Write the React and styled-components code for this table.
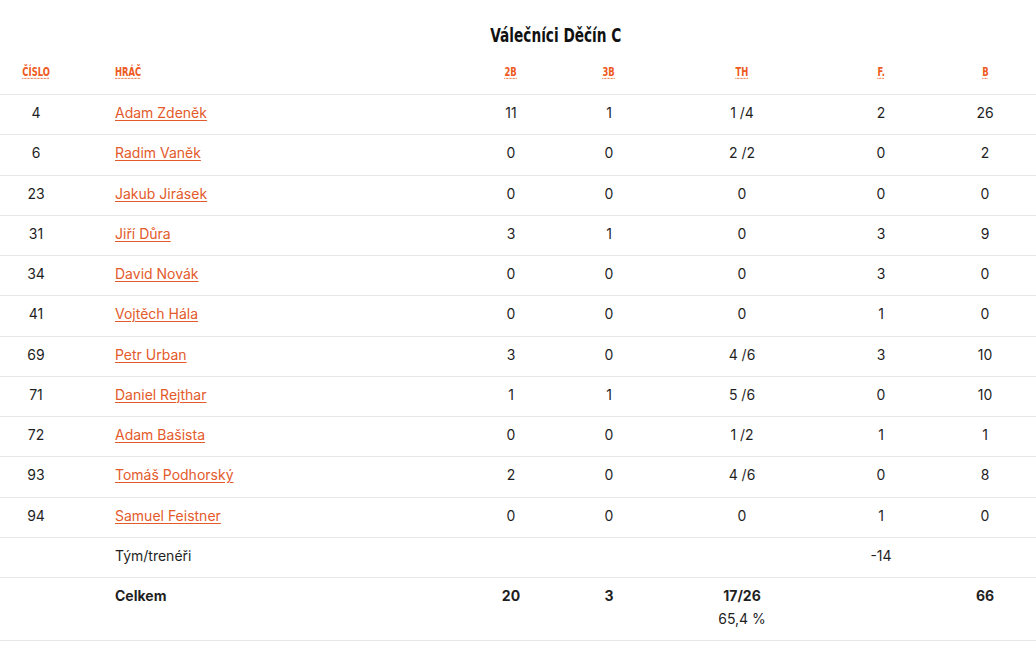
import React from 'react';
import styled, { createGlobalStyle } from 'styled-components';

const GlobalStyle = createGlobalStyle`
    html, body {
        margin: 0;
        padding: 0;
        background: #fff;
    }
    body {
        font-family: Inter, "Noto Sans", sans-serif;
        font-size: 14px;
        color: #1f1f1f;
    }
`;

const Wrapper = styled.div`
    width: 1036px;
`;

const Title = styled.h2`
    margin: 0;
    padding: 23px 0 0 76px;
    text-align: center;
    line-height: 24px;
`;

const TitleText = styled.span`
    display: inline-block;
    transform: scaleX(0.8);
    font-family: "DejaVu Sans Condensed", "DejaVu Sans", sans-serif;
    font-stretch: condensed;
    font-weight: 700;
    font-size: 19px;
    color: #111;
`;

const Table = styled.table`
    width: 100%;
    border-collapse: collapse;
    table-layout: fixed;
`;

const Th = styled.th`
    padding: 16px 0 14px;
    padding-left: ${p => (p.$left ? '43px' : '0')};
    text-align: ${p => (p.$left ? 'left' : 'center')};
    border-bottom: 1px solid #e6e6e6;
    line-height: 16px;
    font-weight: 400;
`;

const Abbr = styled.abbr`
    display: inline-block;
    transform: scaleX(0.72);
    transform-origin: ${p => (p.$left ? 'left center' : 'center')};
    font-family: "DejaVu Sans Condensed", "DejaVu Sans", sans-serif;
    font-stretch: condensed;
    font-weight: 700;
    font-size: 13px;
    text-transform: uppercase;
    color: #ee5a22;
    text-decoration: underline dotted;
    text-underline-offset: 2px;
    cursor: help;
`;

const Td = styled.td`
    padding: 8px 0 11.25px;
    padding-left: ${p => (p.$left ? '43px' : '0')};
    text-align: ${p => (p.$left ? 'left' : 'center')};
    vertical-align: top;
    line-height: 20px;
    border-bottom: 1px solid #e6e6e6;
    font-weight: ${p => (p.$bold ? 700 : 400)};
`;

const PlayerLink = styled.a`
    color: #e35a2b;
    text-decoration: underline;
    text-underline-offset: 2px;
`;

const Sub = styled.div`
    margin-top: 3px;
    font-weight: 400;
`;

const players = [
    [4, 'Adam Zdeněk', 11, 1, '1 /4', 2, 26],
    [6, 'Radim Vaněk', 0, 0, '2 /2', 0, 2],
    [23, 'Jakub Jirásek', 0, 0, '0', 0, 0],
    [31, 'Jiří Důra', 3, 1, '0', 3, 9],
    [34, 'David Novák', 0, 0, '0', 3, 0],
    [41, 'Vojtěch Hála', 0, 0, '0', 1, 0],
    [69, 'Petr Urban', 3, 0, '4 /6', 3, 10],
    [71, 'Daniel Rejthar', 1, 1, '5 /6', 0, 10],
    [72, 'Adam Bašista', 0, 0, '1 /2', 1, 1],
    [93, 'Tomáš Podhorský', 2, 0, '4 /6', 0, 8],
    [94, 'Samuel Feistner', 0, 0, '0', 1, 0],
];

const headers = [
    ['Číslo', 'Číslo dresu'],
    ['Hráč', 'Hráč'],
    ['2B', 'Dvoubodové koše'],
    ['3B', 'Tříbodové koše'],
    ['TH', 'Trestné hody'],
    ['F.', 'Fauly'],
    ['B', 'Body'],
];

const App = () => (
    <Wrapper>
        <GlobalStyle />
        <Title>
            <TitleText>Válečníci Děčín C</TitleText>
        </Title>
        <Table>
            <colgroup>
                <col style={{ width: 72 }} />
                <col style={{ width: 388 }} />
                <col style={{ width: 102 }} />
                <col style={{ width: 94 }} />
                <col style={{ width: 172 }} />
                <col style={{ width: 106 }} />
                <col style={{ width: 102 }} />
            </colgroup>
            <thead>
                <tr>
                    {headers.map(([label, title], i) => (
                        <Th key={label} $left={i === 1}>
                            <Abbr title={title} $left={i === 1}>{label}</Abbr>
                        </Th>
                    ))}
                </tr>
            </thead>
            <tbody>
                {players.map(([num, name, b2, b3, th, f, b]) => (
                    <tr key={num}>
                        <Td>{num}</Td>
                        <Td $left>
                            <PlayerLink href="#">{name}</PlayerLink>
                        </Td>
                        <Td>{b2}</Td>
                        <Td>{b3}</Td>
                        <Td>{th}</Td>
                        <Td>{f}</Td>
                        <Td>{b}</Td>
                    </tr>
                ))}
                <tr>
                    <Td />
                    <Td $left>Tým/trenéři</Td>
                    <Td />
                    <Td />
                    <Td />
                    <Td>-14</Td>
                    <Td />
                </tr>
                <tr>
                    <Td />
                    <Td $left $bold>Celkem</Td>
                    <Td $bold>20</Td>
                    <Td $bold>3</Td>
                    <Td $bold>
                        17/26
                        <Sub>65,4 %</Sub>
                    </Td>
                    <Td />
                    <Td $bold>66</Td>
                </tr>
            </tbody>
        </Table>
    </Wrapper>
);

export default App;
